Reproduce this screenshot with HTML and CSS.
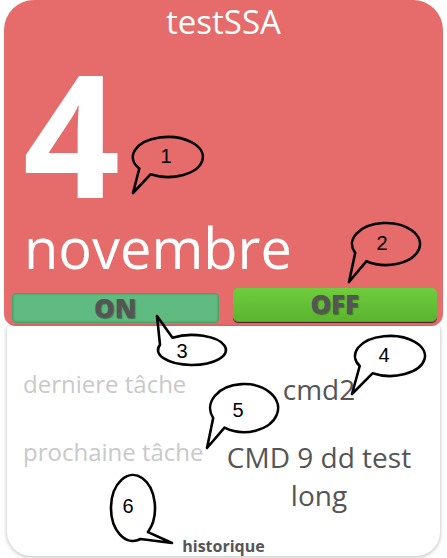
FILE: index.html
```html
<!DOCTYPE html>
<html lang="fr">
<head>
<meta charset="utf-8">
<title>testSSA</title>
<link rel="stylesheet" href="styles.css">
</head>
<body>
<div class="page">
  <div class="tile">
    <div class="head">
      <div class="title">testSSA</div>
      <div class="day">4</div>
      <div class="month">novembre</div>
      <div class="buttons">
        <div class="btn btn-on">ON</div>
        <div class="btn btn-off">OFF</div>
      </div>
    </div>
    <div class="panel">
      <div class="tasks">
        <div class="label">derniere tâche</div>
        <div class="value">cmd2</div>
        <div class="label">prochaine tâche</div>
        <div class="value">CMD 9 dd test long</div>
      </div>
      <div class="history">historique</div>
    </div>
  </div>

  <svg class="notes" width="447" height="558" viewBox="0 0 447 558">
    <g class="bubble">
      <path d="M139.3 168.5 A35 20 0 1 1 150.5 174.3 L133 193 Z"/>
      <path d="M355.2 252.9 A34 21 0 1 1 366.5 261.2 L349 282 Z"/>
      <path d="M172.5 337.7 A34 15 0 1 1 160 344.9 L157 316 Z"/>
      <path d="M359.7 366 A35 20 0 1 1 372.5 373.3 L352 394 Z"/>
      <path d="M213.2 418.1 A34 24 0 1 1 224.5 427.7 L207 448 Z"/>
      <path d="M140.5 539 A22 33 0 1 1 148 532.1 L172 543 Z"/>
    </g>
    <g class="num">
      <text x="166" y="163">1</text>
      <text x="382" y="250">2</text>
      <text x="182" y="358">3</text>
      <text x="384" y="362">4</text>
      <text x="238" y="417">5</text>
      <text x="128" y="513">6</text>
    </g>
  </svg>
</div>
</body>
</html>
```

FILE: styles.css
```css
html, body {
  margin: 0;
  padding: 0;
  background: #ffffff;
}

.page {
  position: relative;
  width: 447px;
  height: 558px;
}

.tile {
  margin: 0 4px;
  font-family: "Open Sans", "DejaVu Sans", sans-serif;
}

.head {
  background: #e66b6b;
  border-radius: 30px 30px 12px 12px;
  height: 326px;
  box-sizing: border-box;
  padding: 0 0 3px 0;
  display: flex;
  flex-direction: column;
  color: #ffffff;
}

.title {
  font-size: 33px;
  line-height: 44px;
  text-align: center;
}

.day {
  font-size: 170px;
  font-weight: 700;
  line-height: 150px;
  margin-top: 13px;
  padding-left: 19px;
}

.month {
  font-size: 56px;
  line-height: 60px;
  margin-top: 10px;
  padding-left: 20px;
}

.buttons {
  margin-top: 12px;
  display: flex;
  align-items: flex-end;
  gap: 14px;
  padding: 0 6px 0 8px;
  height: 34px;
}

.btn {
  flex: 1;
  box-sizing: border-box;
  text-align: center;
  font-weight: 800;
  font-size: 26px;
  color: #555555;
  text-shadow: 1px 1px 1px rgba(0, 0, 0, 0.35);
}

.btn-on {
  height: 30px;
  line-height: 28px;
  background: #5fbb7f;
  border: 1px solid #4f9f6b;
  border-radius: 4px;
  box-shadow: inset 0 0 2px rgba(0, 0, 0, 0.25);
}

.btn-off {
  height: 33px;
  line-height: 33px;
  background: linear-gradient(#6fcc3d, #5bb52f);
  border-radius: 5px;
  box-shadow: 0 1px 0 #9b7474, 0 2px 0 #4a2323;
  margin-bottom: 2px;
}

.panel {
  margin: 0 3px;
  height: 230px;
  box-sizing: border-box;
  padding-top: 42px;
  background: #ffffff;
  border-radius: 0 0 24px 24px;
  box-shadow: 0 1px 4px rgba(0, 0, 0, 0.28);
  display: flex;
  flex-direction: column;
}

.tasks {
  display: grid;
  grid-template-columns: 184px 224px;
  row-gap: 28px;
  padding-left: 16px;
  align-items: start;
}

.label {
  font-size: 24px;
  line-height: 32px;
  color: #c9c9c9;
  white-space: nowrap;
}

.value {
  font-size: 28px;
  line-height: 38px;
  padding-top: 2px;
  color: #555555;
  text-align: center;
}

.history {
  margin-top: 22px;
  font-size: 16px;
  font-weight: 700;
  line-height: 20px;
  color: #555555;
  text-align: center;
}

.notes {
  position: absolute;
  left: 0;
  top: 0;
  pointer-events: none;
}

.bubble path {
  fill: none;
  stroke: #000000;
  stroke-width: 2.6;
  stroke-linejoin: round;
}

.num text {
  font-family: "Liberation Sans", Arial, sans-serif;
  font-size: 20px;
  fill: #000000;
  text-anchor: middle;
}
```
